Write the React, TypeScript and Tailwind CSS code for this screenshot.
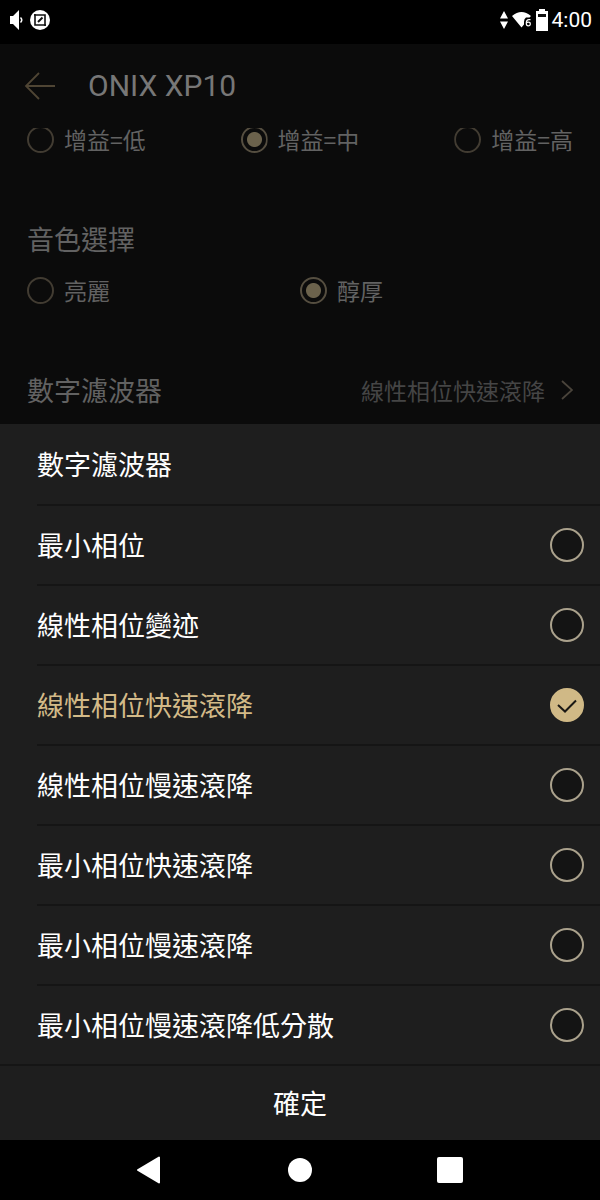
import { useState } from 'react';

type RadioGroupProps = {
    name: string;
    options: string[];
    value: string;
    onChange: (value: string) => void;
    className: string;
};

const gainOptions = ['增益=低', '增益=中', '增益=高'];
const toneOptions = ['亮麗', '醇厚'];
const filterOptions = [
    '最小相位',
    '線性相位變迹',
    '線性相位快速滾降',
    '線性相位慢速滾降',
    '最小相位快速滾降',
    '最小相位慢速滾降',
    '最小相位慢速滾降低分散'
];

const StatusBar = () => (
    <div className="flex h-11 items-center justify-between bg-black pr-2 pl-2.5 pb-1 font-['Roboto',sans-serif] text-white">
        <div className="flex items-center gap-1.5">
            <svg className="h-5 w-3.5" viewBox="0 0 14 20">
                <path d="M0 6h3L9 0v20L3 14H0z" fill="currentColor" />
                <path d="M10.500 7.500q2.500 2.500 0 5" fill="none" stroke="currentColor" strokeWidth="1.500" />
            </svg>
            <svg className="size-5" viewBox="0 0 20 20">
                <circle cx="10" cy="10" r="10" fill="currentColor" />
                <path d="M4 5h11v11M5 4v11h11" fill="none" stroke="#111" strokeWidth="1.600" />
                <path d="M8 12l4.500-4.500" stroke="#111" strokeWidth="2" />
            </svg>
        </div>
        <div className="flex items-center">
            <svg className="mr-1 h-5 w-2" viewBox="0 0 8 20">
                <path d="M4 1l4 7.500H0zM4 19l4-7.500H0z" fill="currentColor" />
            </svg>
            <svg className="mr-1 h-5 w-5" viewBox="0 0 20 20">
                <path d="M0 6Q9.500 -2 19 6L17.500 7.500H14Q12 8.500 12 12V14.500L9.500 17.500z" fill="currentColor" />
                <path d="M18.500 9.700h-1.500q-2.700 0-2.700 3.300v.5q0 2.300 2 2.300t2-1.800-2-1.800q-1.300 0-2 1" fill="none" stroke="currentColor" strokeWidth="1.200" />
            </svg>
            <svg className="mr-1 h-[22px] w-3" viewBox="0 0 12 22">
                <path d="M3 0h6v2h3v20H0V2h3z" fill="currentColor" />
                <path d="M2 5h8v3H2z" fill="#111" />
            </svg>
            <span className="text-[21px] leading-6">4:00</span>
        </div>
    </div>
);

const RadioGroup = ({ name, options, value, onChange, className }: RadioGroupProps) => (
    <div className={className}>
        {options.map((option) => (
            <label key={option} className="flex items-center gap-2.5 text-[23px] leading-[27px] text-[#626262]">
                <input
                    type="radio"
                    name={name}
                    checked={value === option}
                    onChange={() => onChange(option)}
                    className="size-[27px] shrink-0 appearance-none rounded-full border-2 border-[#423c32] checked:border-[#554e40] checked:bg-[radial-gradient(circle,#6b624c_7px,transparent_8px)]"
                />
                {option}
            </label>
        ))}
    </div>
);

export default function App() {
    const [gain, setGain] = useState('增益=中');
    const [tone, setTone] = useState('醇厚');
    const [filter, setFilter] = useState('線性相位快速滾降');

    return (
        <div className="flex min-h-screen flex-col bg-black font-['Noto_Sans_CJK_TC',sans-serif]">
            <StatusBar />

            <div className="flex-1 bg-[#0b0b0b] text-[#626262]">
                <header className="flex items-center px-6 py-6">
                    <button type="button" aria-label="返回" className="mr-8">
                        <svg className="size-8" viewBox="0 0 32 32" fill="none" stroke="#4f4534" strokeWidth="1.800">
                            <path d="M31 16H2M15 3L2 16l13 13" />
                        </svg>
                    </button>
                    <h1 className="font-['Roboto',sans-serif] text-[30px] leading-9 text-[#777]">ONIX XP10</h1>
                </header>

                <main className="px-[27px] pb-4">
                    <RadioGroup
                        name="gain"
                        options={gainOptions}
                        value={gain}
                        onChange={setGain}
                        className="-mt-0.5 flex justify-between [&_input]:[clip-path:inset(2px_0_0_0)]"
                    />

                    <h2 className="mt-17 mb-5 text-[27px] leading-9">音色選擇</h2>
                    <RadioGroup
                        name="tone"
                        options={toneOptions}
                        value={tone}
                        onChange={setTone}
                        className="grid grid-cols-2"
                    />

                    <button type="button" className="mt-17 flex w-full items-center leading-9">
                        <span className="text-[27px]">數字濾波器</span>
                        <span className="mr-4 ml-auto text-[23px] text-[#454545]">{filter}</span>
                        <svg className="h-5 w-3" viewBox="0 0 12 20" fill="none" stroke="#4a443b" strokeWidth="1.800">
                            <path d="M1 1l10 9L1 19" />
                        </svg>
                    </button>
                </main>
            </div>

            <section role="dialog" aria-labelledby="filter-title" className="bg-[#1e1e1e] text-[27px] leading-9 text-white">
                <h2 id="filter-title" className="ml-[37px] flex h-20 items-center">數字濾波器</h2>
                {filterOptions.map((option) => (
                    <label
                        key={option}
                        className="ml-[37px] flex h-20 items-center justify-between border-t-2 border-[#151515] pr-4 has-checked:text-[#d3ba88]"
                    >
                        {option}
                        <span className="grid">
                            <input
                                type="radio"
                                name="filter"
                                checked={filter === option}
                                onChange={() => setFilter(option)}
                                className="peer col-start-1 row-start-1 size-[34px] appearance-none rounded-full border-2 border-[#aaa18c] bg-[#141414] checked:border-[#d0b986] checked:bg-[#d0b986]"
                            />
                            <svg
                                className="pointer-events-none invisible col-start-1 row-start-1 size-[34px] peer-checked:visible"
                                viewBox="0 0 34 34"
                                fill="none"
                                stroke="#1a1814"
                                strokeWidth="2"
                            >
                                <path d="M8 17l7 6.500 11-11" />
                            </svg>
                        </span>
                    </label>
                ))}
                <button type="button" className="h-19 w-full border-t-2 border-[#151515]">確定</button>
            </section>

            <nav className="grid h-15 grid-cols-3 place-items-center bg-black px-[12.5%] text-white">
                <button type="button" aria-label="返回">
                    <svg className="h-7 w-[26px]" viewBox="0 0 26 28">
                        <path d="M22 1.500v25L1 14z" fill="currentColor" stroke="currentColor" strokeWidth="2" strokeLinejoin="round" />
                    </svg>
                </button>
                <button type="button" aria-label="主畫面" className="size-6 rounded-full bg-white" />
                <button type="button" aria-label="最近使用" className="size-[26px] rounded-xs bg-white" />
            </nav>
        </div>
    );
}
